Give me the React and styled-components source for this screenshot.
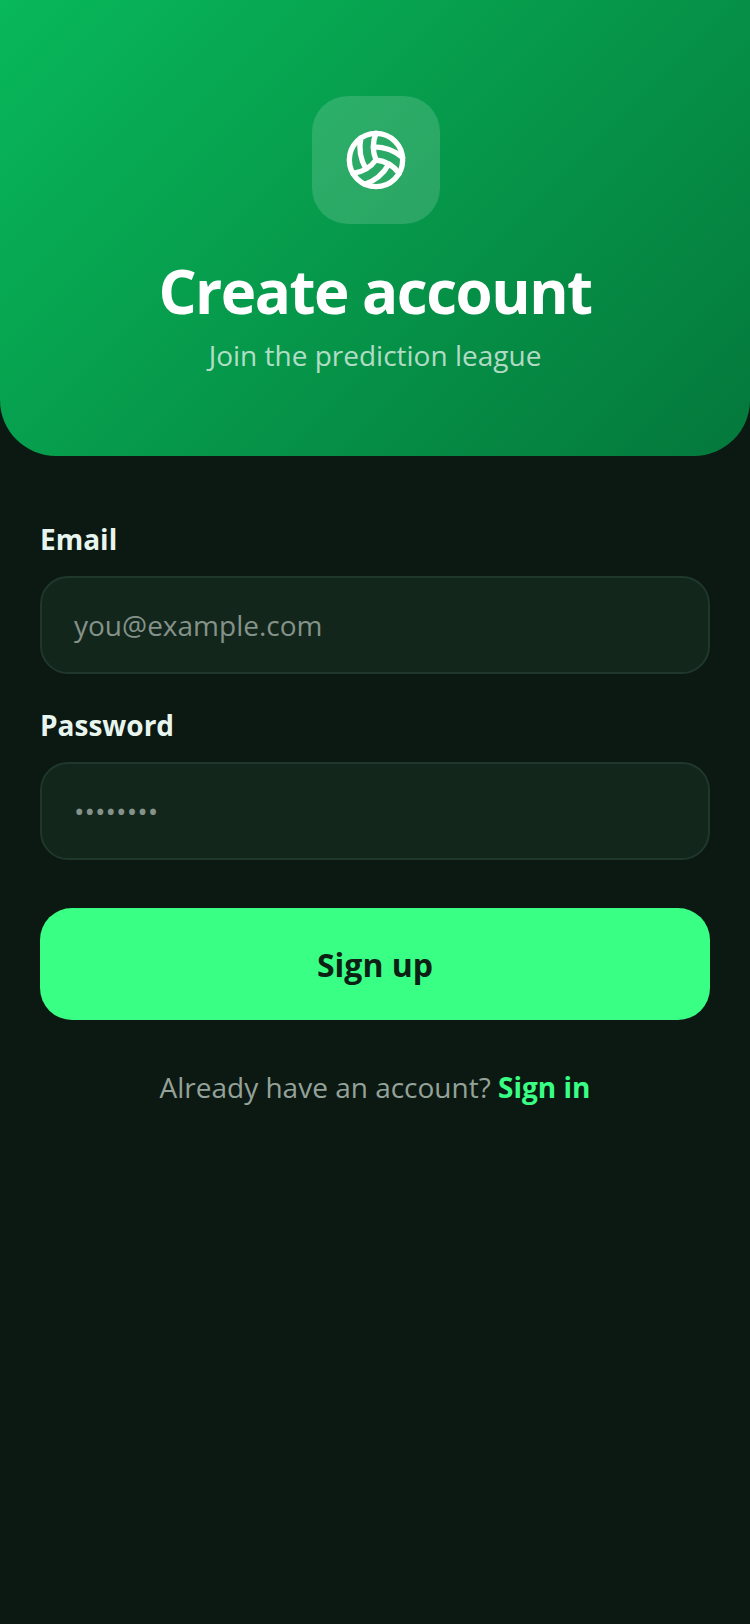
import React from 'react';
import styled, { createGlobalStyle } from 'styled-components';
import { Volleyball } from 'lucide-react';

const GlobalStyle = createGlobalStyle`
	html, body {
		margin: 0;
		padding: 0;
		background: #0c1912;
	}
	* {
		box-sizing: border-box;
	}
`;

const Page = styled.div`
	min-height: 1624px;
	background: #0c1912;
	font-family: 'Open Sans', sans-serif;
`;

const Header = styled.header`
	height: 456px;
	padding-top: 96px;
	display: flex;
	flex-direction: column;
	align-items: center;
	background: linear-gradient(135deg, #08b85a 0%, #04783b 100%);
	border-radius: 0 0 56px 56px;
`;

const LogoTile = styled.div`
	width: 128px;
	height: 128px;
	margin-left: 2px;
	display: flex;
	align-items: center;
	justify-content: center;
	background: rgba(255, 255, 255, 0.15);
	border-radius: 36px;
	color: #fff;
`;

const Title = styled.h1`
	margin: 31px 0 0;
	font-size: 60px;
	line-height: 72px;
	font-weight: 700;
	letter-spacing: -1.5px;
	color: #fff;
`;

const Subtitle = styled.p`
	margin: 9px 0 0;
	font-size: 28px;
	line-height: 38px;
	color: rgba(255, 255, 255, 0.7);
`;

const Form = styled.form`
	padding: 64px 40px 0;
	display: flex;
	flex-direction: column;
`;

const Label = styled.label`
	display: block;
	margin-bottom: 18px;
	font-size: 28px;
	line-height: 38px;
	font-weight: 700;
	color: #e8f5ee;
`;

const Field = styled.div`
	margin-bottom: 32px;
`;

const Input = styled.input`
	display: block;
	width: 100%;
	height: 98px;
	padding: 0 32px;
	background: #13261b;
	border: 2px solid #1f382b;
	border-radius: 28px;
	font-family: inherit;
	font-size: 28px;
	color: #e8f5ee;
	outline: none;

	&::placeholder {
		color: #84928a;
		opacity: 1;
	}
`;

const SubmitButton = styled.button`
	height: 112px;
	margin-top: 16px;
	background: #39ff85;
	border: none;
	border-radius: 32px;
	font-family: inherit;
	font-size: 32px;
	font-weight: 700;
	color: #0c2014;
`;

const Footnote = styled.p`
	margin: 48px 0 0;
	text-align: center;
	font-size: 28px;
	line-height: 38px;
	color: #94a299;
`;

const SignInLink = styled.a`
	font-weight: 700;
	color: #39ff85;
`;

export default function App() {
	return (
		<Page>
			<GlobalStyle />
			<Header>
				<LogoTile>
					<Volleyball size={64} />
				</LogoTile>
				<Title>Create account</Title>
				<Subtitle>Join the prediction league</Subtitle>
			</Header>
			<Form>
				<Field>
					<Label>Email</Label>
					<Input type='email' placeholder='you@example.com' />
				</Field>
				<Field>
					<Label>Password</Label>
					<Input type='password' placeholder='••••••••' />
				</Field>
				<SubmitButton type='button'>Sign up</SubmitButton>
				<Footnote>
					Already have an account? <SignInLink>Sign in</SignInLink>
				</Footnote>
			</Form>
		</Page>
	);
}
